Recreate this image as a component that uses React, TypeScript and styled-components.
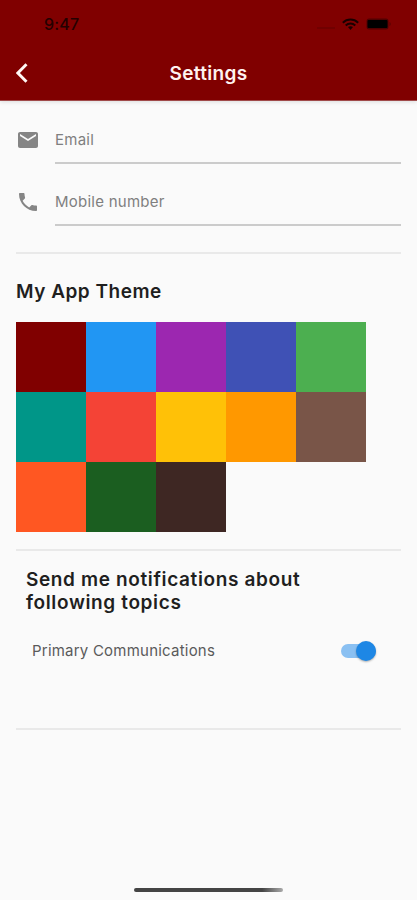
import React from "react";
import styled, { createGlobalStyle } from "styled-components";

const GlobalStyle = createGlobalStyle`
  * { box-sizing: border-box; }
  html, body { margin: 0; padding: 0; background: #fafafa; }
  body { font-family: Inter, Roboto, "Liberation Sans", sans-serif; color: #202020; }
`;

const Screen = styled.div`
  width: 100%;
  max-width: 417px;
  height: 900px;
  display: flex;
  flex-direction: column;
  overflow: hidden;
  background: #fafafa;
`;

const Header = styled.header`
  height: 101px;
  flex: none;
  background: #800000;
  border-bottom: 1px solid #a04a4a;
  box-shadow: 0 1px 4px rgba(0, 0, 0, 0.12);
`;

const StatusBar = styled.div`
  height: 48px;
  padding: 0 26px 0 44px;
  display: flex;
  align-items: center;
  justify-content: space-between;
`;

const Clock = styled.span`
  font-size: 16px;
  line-height: 20px;
  font-weight: 500;
  letter-spacing: 0.15px;
  color: #240000;
`;

const StatusIcons = styled.div`
  display: flex;
  align-items: center;
`;

const Signal = styled.span`
  width: 18px;
  height: 2px;
  margin: 7px 7px 0 0;
  background: #710000;
`;

const BatterySlot = styled.span`
  display: flex;
  margin-left: 7px;
`;

const NavBar = styled.div`
  height: 52px;
  display: grid;
  grid-template-columns: 60px 1fr 60px;
  align-items: center;
`;

const BackButton = styled.button`
  border: 0;
  padding: 0 0 2px 16px;
  background: none;
  height: 24px;
  display: flex;
  align-items: center;
`;

const Title = styled.h1`
  margin: 0;
  text-align: center;
  font-size: 19px;
  line-height: 24px;
  font-weight: 600;
  letter-spacing: 0.35px;
  color: #fff2f0;
`;

const Content = styled.main`
  flex: 1;
  padding: 0 16px;
  display: flex;
  flex-direction: column;
`;

const Form = styled.form`
  padding-top: 15px;
  height: 151px;
`;

const Field = styled.label`
  height: 62px;
  display: grid;
  grid-template-columns: 39px 1fr;
`;

const FieldIcon = styled.span`
  padding-top: 12px;
  height: 48px;
`;

const FieldInput = styled.span`
  height: 48px;
  padding-top: 14px;
  border-bottom: 2px solid #cbcbcb;
  font-size: 15px;
  line-height: 20px;
  letter-spacing: 0.25px;
  color: #7f7f7f;
`;

const Divider = styled.hr`
  width: 100%;
  height: 2px;
  flex: none;
  border: 0;
  margin: 0;
  background: #e9e9e9;
`;

const SectionTitle = styled.h2<{ $tracking?: string }>`
  margin: 0;
  font-size: 19px;
  line-height: 23px;
  font-weight: 600;
  letter-spacing: ${({ $tracking = "0.5px" }) => $tracking};
  color: #1f1f1f;
`;

const ThemeSection = styled.section`
  height: 295px;
  padding-top: 26px;
`;

const Palette = styled.div`
  margin-top: 19px;
  display: grid;
  grid-template-columns: repeat(5, 70px);
  grid-auto-rows: 70px;
`;

const Swatch = styled.button<{ $color: string }>`
  border: 0;
  padding: 0;
  background: ${({ $color }) => $color};
`;

const TopicsSection = styled.section`
  height: 177px;
  padding: 17px 20px 0 10px;
`;

const TopicRow = styled.div`
  height: 48px;
  margin-top: 13px;
  padding: 0 5px 0 6px;
  display: flex;
  align-items: center;
  justify-content: space-between;
`;

const TopicName = styled.span`
  font-size: 15px;
  line-height: 20px;
  letter-spacing: 0.22px;
  color: #5a5a5a;
`;

const Track = styled.button`
  width: 35px;
  height: 14px;
  border: 0;
  padding: 0;
  border-radius: 7px;
  background: #8ac0f2;
  display: flex;
  align-items: center;
  justify-content: flex-end;
`;

const Thumb = styled.span`
  width: 20px;
  height: 20px;
  flex: none;
  border-radius: 50%;
  background: #1e87e5;
  box-shadow: 0 1px 2px rgba(0, 0, 0, 0.3);
`;

const HomeIndicator = styled.div`
  width: 149px;
  height: 4px;
  flex: none;
  align-self: center;
  margin-bottom: 8px;
  border-radius: 2px;
  background: linear-gradient(90deg, #444 86%, #aaa);
`;

const swatches = [
  "#800000", "#2196f3", "#9c27b0", "#3f51b5", "#4caf50",
  "#009688", "#f44336", "#ffc107", "#ff9800", "#795548",
  "#ff5722", "#1b5e20", "#3e2723",
];

const WifiIcon = () => (
  <svg width="17" height="13" viewBox="0 0 17 13" fill="none" stroke="#180000" strokeWidth="2">
    <path d="M.8 4.700C5.200.5 11.800.5 16.200 4.700" />
    <path d="M3.700 7.500c2.700-2.600 6.900-2.600 9.600 0" />
    <path d="M6 9.100c1.400-1.200 3.600-1.200 5 0L8.500 12z" fill="#180000" stroke="none" />
  </svg>
);

const BatteryIcon = () => (
  <svg width="25" height="12" viewBox="0 0 25 12">
    <rect x="0.5" y="0.5" width="22" height="11" rx="2.5" fill="#500000" />
    <rect x="1.5" y="2" width="20" height="8" rx="1" fill="#000" />
    <path d="M23.400 4v4c1-.4 1.400-1 1.400-2s-.4-1.600-1.400-2z" fill="#600000" />
  </svg>
);

const BackIcon = () => (
  <svg width="12" height="20" viewBox="0 0 12 20" fill="none" stroke="#fff7f5" strokeWidth="2.9">
    <path d="M10.500 1.200 1.900 10l8.600 8.800" />
  </svg>
);

const MailIcon = () => (
  <svg width="24" height="24" viewBox="0 0 24 24" fill="#858585">
    <path d="M20 4H4c-1.100 0-1.990.9-1.990 2L2 18c0 1.100.9 2 2 2h16c1.100 0 2-.9 2-2V6c0-1.100-.9-2-2-2zm0 4-8 5-8-5V6l8 5 8-5v2z" />
  </svg>
);

const PhoneIcon = () => (
  <svg width="24" height="24" viewBox="0 0 24 24" fill="#858585">
    <path d="M6.620 10.790c1.440 2.830 3.760 5.140 6.590 6.590l2.200-2.200c.270-.270.670-.360 1.020-.240 1.120.370 2.330.570 3.570.570.550 0 1 .450 1 1V20c0 .550-.450 1-1 1-9.390 0-17-7.610-17-17 0-.550.450-1 1-1h3.500c.550 0 1 .450 1 1 0 1.250.200 2.450.570 3.570.110.350.030.740-.250 1.020l-2.200 2.200z" />
  </svg>
);

export default function App() {
  return (
    <>
      <GlobalStyle />
      <Screen>
        <Header>
          <StatusBar>
            <Clock>9:47</Clock>
            <StatusIcons>
              <Signal />
              <WifiIcon />
              <BatterySlot><BatteryIcon /></BatterySlot>
            </StatusIcons>
          </StatusBar>
          <NavBar>
            <BackButton aria-label="Back"><BackIcon /></BackButton>
            <Title>Settings</Title>
          </NavBar>
        </Header>
        <Content>
          <Form>
            <Field>
              <FieldIcon><MailIcon /></FieldIcon>
              <FieldInput>Email</FieldInput>
            </Field>
            <Field>
              <FieldIcon><PhoneIcon /></FieldIcon>
              <FieldInput>Mobile number</FieldInput>
            </Field>
          </Form>
          <Divider />
          <ThemeSection>
            <SectionTitle>My App Theme</SectionTitle>
            <Palette>
              {swatches.map((color) => (
                <Swatch key={color} $color={color} aria-label={color} />
              ))}
            </Palette>
          </ThemeSection>
          <Divider />
          <TopicsSection>
            <SectionTitle $tracking="0.63px">Send me notifications about following topics</SectionTitle>
            <TopicRow>
              <TopicName>Primary Communications</TopicName>
              <Track role="switch" aria-checked="true" aria-label="Primary Communications">
                <Thumb />
              </Track>
            </TopicRow>
          </TopicsSection>
          <Divider />
        </Content>
        <HomeIndicator />
      </Screen>
    </>
  );
}
